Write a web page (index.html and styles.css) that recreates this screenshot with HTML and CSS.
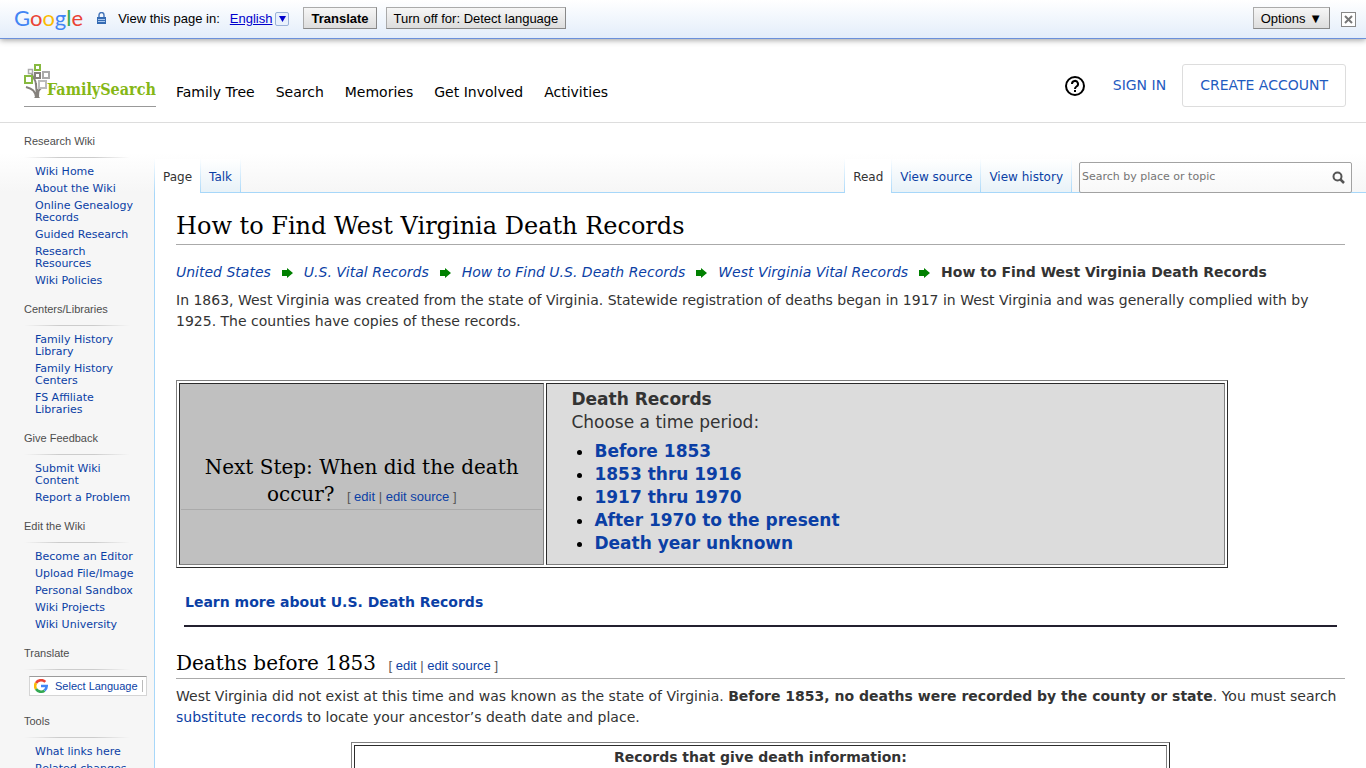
FILE: index.html
```html
<!DOCTYPE html>
<html lang="en">
<head>
  <meta charset="UTF-8" />
  <title>How to Find West Virginia Death Records</title>
  <link rel="stylesheet" href="styles.css">
</head>
<body>
  <div class="translate-bar">
    <span class="google"><span class="b">G</span><span class="r">o</span><span class="y">o</span><span class="b">g</span><span class="g">l</span><span class="r">e</span></span>
    <svg class="lock" width="9" height="12" viewBox="0 0 9 12">
      <path d="M2 5V3a2.5 2.5 0 0 1 5 0v2" fill="none" stroke="#4474b8" stroke-width="1.4"/>
      <rect y="5" width="9" height="7" fill="#356bb3"/>
      <path d="M1 7.5h7M1 9.5h7" stroke="#a9c8ee"/>
    </svg>
    <span>View this page in:</span>
    <a class="lang" href="#">English</a>
    <button class="lang-arrow" aria-label="Choose language"><svg width="7" height="6"><path d="M0 0h7L3.500 6z" fill="#00c"/></svg></button>
    <button class="bar-btn translate">Translate</button>
    <button class="bar-btn">Turn off for: Detect language</button>
    <button class="bar-btn options">Options ▼</button>
    <button class="close" aria-label="Close"><svg width="9" height="9"><path d="M1 1l7 7M8 1L1 8" stroke="#777" stroke-width="2"/></svg></button>
  </div>

  <header class="header">
    <a class="logo" href="#" aria-label="FamilySearch">
      <svg width="132" height="36" viewBox="0 0 132 36">
        <g fill="none" stroke="#85817c">
          <path d="M12 19c0 6 1 9 1 14M2 23c7 2 9 4 10 10M19 23c-5 2-5 5-5 10M8 10c1 5 4 5 4 11" stroke-width="2"/>
        </g>
        <path d="M10 34c3-2 2-7 2-9h2c-1 4 0 7 2 9z" fill="#85817c"/>
        <g fill="#fff" stroke-width="2">
          <rect x="11" y="1" width="5" height="5" stroke="#87b940"/>
          <rect x="4.500" y="5.500" width="4" height="4" stroke="#aaa" stroke-width="1.500"/>
          <rect x="11" y="9" width="5" height="5" stroke="#85817c"/>
          <rect x="19" y="8" width="6" height="6" stroke="#aaa"/>
          <rect x="1" y="12" width="7" height="7" stroke="#87b940"/>
          <rect x="15" y="17" width="7" height="7" stroke="#bbb"/>
        </g>
        <text class="logo-text" x="23" y="31">FamilySearch</text>
      </svg>
    </a>
    <nav class="nav">
      <a href="#">Family Tree</a>
      <a href="#">Search</a>
      <a href="#">Memories</a>
      <a href="#">Get Involved</a>
      <a href="#">Activities</a>
    </nav>
    <div class="account">
      <a class="help" href="#" aria-label="Help">
        <svg width="20" height="20" viewBox="0 0 20 20" fill="none" stroke="#000" stroke-width="2">
          <circle cx="10" cy="10" r="9"/>
          <path d="M7 8a3 3 0 1 1 4.500 2.500C10.300 11.300 10 11.600 10 13"/>
          <path d="M10 14v2"/>
        </svg>
      </a>
      <a class="sign-in" href="#">SIGN IN</a>
      <a class="create" href="#">CREATE ACCOUNT</a>
    </div>
  </header>

  <div class="page">
    <aside class="sidebar">
      <h3>Research Wiki</h3>
      <ul>
        <li><a href="#">Wiki Home</a></li>
        <li><a href="#">About the Wiki</a></li>
        <li><a href="#">Online Genealogy Records</a></li>
        <li><a href="#">Guided Research</a></li>
        <li><a href="#">Research<br>Resources</a></li>
        <li><a href="#">Wiki Policies</a></li>
      </ul>
      <h3>Centers/Libraries</h3>
      <ul>
        <li><a href="#">Family History Library</a></li>
        <li><a href="#">Family History Centers</a></li>
        <li><a href="#">FS Affiliate Libraries</a></li>
      </ul>
      <h3>Give Feedback</h3>
      <ul>
        <li><a href="#">Submit Wiki Content</a></li>
        <li><a href="#">Report a Problem</a></li>
      </ul>
      <h3>Edit the Wiki</h3>
      <ul>
        <li><a href="#">Become an Editor</a></li>
        <li><a href="#">Upload File/Image</a></li>
        <li><a href="#">Personal Sandbox</a></li>
        <li><a href="#">Wiki Projects</a></li>
        <li><a href="#">Wiki University</a></li>
      </ul>
      <h3>Translate</h3>
      <a class="select-language" href="#">
        <svg width="14" height="14" viewBox="0 0 14 14" fill="none" stroke-width="2.600">
          <path d="M2 4A6 6 0 0 1 11.300 2.900" stroke="#ea4335"/>
          <path d="M2 4a6 6 0 0 0 0 6" stroke="#fbbc05"/>
          <path d="M2 10a6 6 0 0 0 8.500 1.600" stroke="#34a853"/>
          <path d="M7 7h5.700a6 6 0 0 1-2.200 4.600" stroke="#4285f4"/>
        </svg>
        <span>Select Language</span>
      </a>
      <h3>Tools</h3>
      <ul>
        <li><a href="#">What links here</a></li>
        <li><a href="#">Related changes</a></li>
      </ul>
    </aside>

    <div class="main">
      <div class="tabs">
        <a class="tab selected" href="#">Page</a>
        <a class="tab" href="#">Talk</a>
        <a class="tab selected views" href="#">Read</a>
        <a class="tab" href="#">View source</a>
        <a class="tab" href="#">View history</a>
        <form class="search">
          <input type="search" placeholder="Search by place or topic" aria-label="Search by place or topic">
          <button type="button" aria-label="Search"><svg width="13" height="13" fill="none" stroke="#555" stroke-width="2"><circle cx="5.500" cy="5.500" r="4"/><path d="M8.500 8.500l3.500 3.500" stroke-width="2.500"/></svg></button>
        </form>
      </div>

      <main class="content">
        <h1>How to Find West Virginia Death Records</h1>
        <div class="crumbs">
          <a href="#">United States</a>
          <svg width="11" height="10"><path d="M0 2h5V0l6 5-6 5V8H0z" fill="#008000"/></svg>
          <a href="#">U.S. Vital Records</a>
          <svg width="11" height="10"><path d="M0 2h5V0l6 5-6 5V8H0z" fill="#008000"/></svg>
          <a href="#">How to Find U.S. Death Records</a>
          <svg width="11" height="10"><path d="M0 2h5V0l6 5-6 5V8H0z" fill="#008000"/></svg>
          <a href="#">West Virginia Vital Records</a>
          <svg width="11" height="10"><path d="M0 2h5V0l6 5-6 5V8H0z" fill="#008000"/></svg>
          <b>How to Find West Virginia Death Records</b>
        </div>
        <p>In 1863, West Virginia was created from the state of Virginia. Statewide registration of deaths began in 1917 in West Virginia and was generally complied with by 1925. The counties have copies of these records.</p>

        <table class="steps" border="1">
          <tr>
            <td class="question">
              <h2>Next Step: When did the death occur? <span class="edit">[ <a href="#">edit</a> | <a href="#">edit source</a> ]</span></h2>
            </td>
            <td class="periods">
              <b>Death Records</b><br>
              Choose a time period:
              <ul>
                <li><a href="#">Before 1853</a></li>
                <li><a href="#">1853 thru 1916</a></li>
                <li><a href="#">1917 thru 1970</a></li>
                <li><a href="#">After 1970 to the present</a></li>
                <li><a href="#">Death year unknown</a></li>
              </ul>
            </td>
          </tr>
        </table>

        <div class="learn"><a href="#">Learn more about U.S. Death Records</a></div>

        <h2>Deaths before 1853 <span class="edit">[ <a href="#">edit</a> | <a href="#">edit source</a> ]</span></h2>
        <p>West Virginia did not exist at this time and was known as the state of Virginia. <b>Before 1853, no deaths were recorded by the county or state</b>. You must search <a href="#">substitute records</a> to locate your ancestor’s death date and place.</p>

        <table class="records" border="1">
          <tr><th>Records that give death information:</th></tr>
        </table>
      </main>
    </div>
  </div>
</body>
</html>
```

FILE: styles.css
```css
* { box-sizing: border-box; }
body { margin: 0; min-height: 100vh; background: #f6f6f6; color: #333; font: 14px/21px Verdana, "DejaVu Sans", sans-serif; }
a { color: #0b3fa5; text-decoration: none; }
svg { flex: none; }
button { font: inherit; cursor: pointer; }

/* translate bar */
.translate-bar { position: relative; display: flex; align-items: center; height: 39px; padding: 0 10px 2px 14px; background: linear-gradient(#fff, #e3edfa); border-bottom: 1px solid #6b90da; box-shadow: 0 1px 6px #999; color: #000; font: 13px/17px Arial, "Liberation Sans", sans-serif; }
.google { margin-right: 14px; font: 22px/24px Lato, sans-serif; }
.b { color: #4285f4; }
.r { color: #ea4335; }
.y { color: #fbbc05; }
.g { color: #34a853; }
.lock { margin-right: 12px; }
.lang { margin-left: 10px; color: #00c; text-decoration: underline; }
.lang-arrow { display: flex; align-items: center; justify-content: center; width: 14px; height: 14px; margin: 2px 14px 0 3px; padding: 0; background: #e9f1fc; border: 1px solid #9ab1d8; border-radius: 2px; }
.bar-btn { height: 22px; padding: 0 7px; background: linear-gradient(#f6f6f6, #ddd); border: 1px solid #aaa; border-right-color: #888; border-bottom-color: #888; color: #000; }
.translate { margin-right: 9px; font-weight: bold; }
.options { margin-left: auto; }
.close { display: flex; align-items: center; justify-content: center; width: 15px; height: 15px; margin: 2px 0 0 11px; padding: 0; background: #fff; border: 1px solid #888; }

/* site header */
.header { display: flex; height: 84px; padding: 0 20px 0 24px; background: #fff; border-bottom: 1px solid #ddd; }
.logo { width: 132px; height: 43px; margin: 25px 20px 0 0; border-bottom: 1px solid #999; }
.logo-text { fill: #85b716; font: bold 16px "DejaVu Serif Condensed", "DejaVu Serif", serif; }
.nav { display: flex; gap: 21px; padding-top: 43px; }
.nav a { color: #000; }
.account { display: flex; align-items: center; gap: 16px; height: 43px; margin: 25px 0 0 auto; }
.help { display: flex; margin-right: 12px; }
.account a { color: #1f5bbf; }
.create { padding: 10px 17px; border: 1px solid #ddd; border-radius: 3px; }

.page { display: flex; background: linear-gradient(#fff 30px, #f6f6f6 69px); }

/* sidebar */
.sidebar { flex: none; width: 154px; padding: 0 24px; font-size: 11px; line-height: 12px; }
.sidebar h3 { margin: 10px 0 0; padding-bottom: 9px; background: linear-gradient(90deg, transparent, #ccc 33%, #ccc 66%, transparent) 0 100% / 100% 1px no-repeat; color: #4d4d4d; font: 11px/16px Arial, "Liberation Sans", sans-serif; }
.sidebar ul { margin: 0 -12px 14px 11px; padding: 8px 0 0; list-style: none; }
.sidebar li { margin-bottom: 5px; }
.select-language { display: flex; align-items: center; gap: 7px; width: 118px; height: 20px; margin: 6px 0 17px 5px; padding-left: 4px; background: #fff; border: 1px solid #d5d5d5; border-top-color: #9b9b9b; font-family: Arial, "Liberation Sans", sans-serif; }
.select-language span { padding-right: 4px; border-right: 1px solid #bbb; white-space: nowrap; }

/* tabs */
.main { flex: 1; min-width: 0; }
.tabs { display: flex; height: 70px; padding: 36px 14px 0 0; border-bottom: 1px solid #a7d7f9; font-size: 12px; line-height: 15px; }
.tab { height: 33px; padding: 11px 8px 0; background: linear-gradient(#fff, #e8f2f8); border-right: 1px solid; border-image: linear-gradient(#fff, #a7d7f9) 1; }
.tab.selected { height: 34px; background: #fff; border-left: 1px solid; color: #333; }
.tab.views { margin-left: auto; }
.search { display: flex; align-items: center; width: 273px; height: 31px; margin: 3px 0 0 7px; border: 1px solid #a2a2a2; border-radius: 2px; background: linear-gradient(#fff, #f8f8f8); }
.search input { flex: 1; min-width: 0; padding: 0 0 2px 2px; border: 0; outline: 0; background: none; color: #333; font: 11px Verdana, "DejaVu Sans", sans-serif; }
.search input::placeholder { color: #757575; }
.search button { display: flex; padding: 0 6px; border: 0; background: none; }

/* article */
.content { padding: 17px 21px 8px; background: #fff; border-left: 1px solid #a7d7f9; }
h1, h2 { margin: 0; border-bottom: 1px solid #aaa; color: #000; font-family: "Museo Slab", "DejaVu Serif", serif; font-weight: normal; }
h1 { padding-bottom: 2px; font-size: 24px; line-height: 32px; }
h2 { padding-bottom: 1px; font-size: 20px; line-height: 27px; }
p { margin: 0; }
.crumbs { display: flex; flex-wrap: wrap; align-items: center; gap: 11px; margin: 17px 0 7px; }
.crumbs a { font-style: italic; }
.edit { margin-left: 6px; color: #555; font: 13px Arial, "Liberation Sans", sans-serif; }
.steps { width: 90%; height: 188px; margin-top: 48px; font-size: 17px; line-height: 23px; }
.steps td { padding: 1px; }
.steps .question { width: 35%; background: #c0c0c0; text-align: center; }
.question h2 { padding-top: 16px; }
.steps .periods { padding: 4px 24px 0; background: #dcdcdc; vertical-align: top; }
.periods ul { margin: 6px 0 0; padding-left: 23px; color: #000; }
.periods a, .learn a { font-weight: bold; }
.learn { margin: 24px 8px 23px; padding: 0 1px 12px; border-bottom: 2px solid #23202f; }
.content h2 + p { margin-top: 7px; }
.records { width: 70%; margin: 14px auto 0; }
```
